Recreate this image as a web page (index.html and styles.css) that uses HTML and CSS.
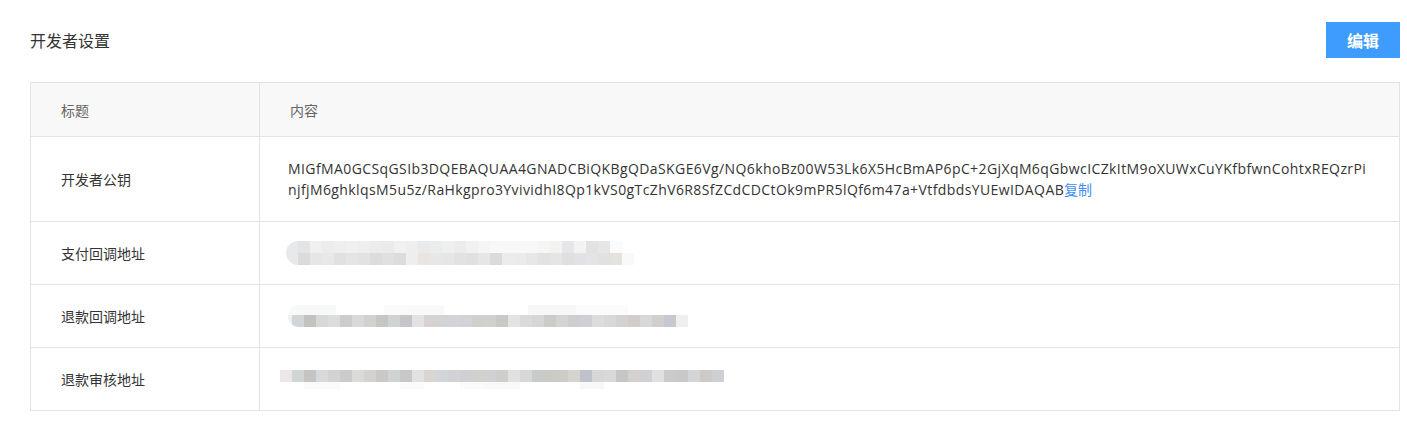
FILE: index.html
```html
<!DOCTYPE html>
<html lang="zh-CN">
<head>
<meta charset="utf-8">
<title>开发者设置</title>
<link rel="stylesheet" href="styles.css">
</head>
<body>
<div class="page">
  <div class="topbar">
    <h1 class="title">开发者设置</h1>
    <button class="btn-edit" type="button">编辑</button>
  </div>
  <table class="info-table">
    <thead>
      <tr class="head-row">
        <th class="col-label">标题</th>
        <th class="col-value">内容</th>
      </tr>
    </thead>
    <tbody>
      <tr class="row-key">
        <td class="col-label">开发者公钥</td>
        <td class="col-value key-text"><span class="key-line">MIGfMA0GCSqGSIb3DQEBAQUAA4GNADCBiQKBgQDaSKGE6Vg/NQ6khoBz00W53Lk6X5HcBmAP6pC+2GjXqM6qGbwcICZkItM9oXUWxCuYKfbfwnCohtxREQzrPi</span><span class="key-line">njfjM6ghklqsM5u5z/RaHkgpro3YvividhI8Qp1kVS0gTcZhV6R8SfZCdCDCtOk9mPR5lQf6m47a+VtfdbdsYUEwIDAQAB<a class="copy-link" href="#">复制</a></span></td>
      </tr>
      <tr class="row">
        <td class="col-label">支付回调地址</td>
        <td class="col-value"><div class="mosaic mosaic-1"></div></td>
      </tr>
      <tr class="row">
        <td class="col-label">退款回调地址</td>
        <td class="col-value"><div class="mosaic mosaic-2"></div></td>
      </tr>
      <tr class="row">
        <td class="col-label">退款审核地址</td>
        <td class="col-value"><div class="mosaic mosaic-3"></div></td>
      </tr>
    </tbody>
  </table>
</div>
</body>
</html>
```

FILE: styles.css
```css
html, body {
  margin: 0;
  padding: 0;
  background: #ffffff;
}

body {
  font-family: "Noto Sans CJK SC", "Open Sans", sans-serif;
  color: #333333;
}

.page {
  padding: 22px 7px 0 30px;
}

.topbar {
  display: flex;
  align-items: center;
  justify-content: space-between;
  height: 36px;
  margin-bottom: 24px;
}

.title {
  margin: 0;
  font-size: 16px;
  font-weight: normal;
  color: #333333;
  line-height: 20px;
}

.btn-edit {
  width: 74px;
  height: 36px;
  border: none;
  background: #3d9cfe;
  color: #ffffff;
  font-family: "Noto Sans CJK SC", sans-serif;
  font-size: 16px;
  font-weight: bold;
  padding: 0;
  cursor: pointer;
}

.info-table {
  width: 1370px;
  border-collapse: collapse;
  table-layout: fixed;
  font-size: 14px;
}

.info-table th,
.info-table td {
  border: 1px solid #e3e3e3;
  padding: 0 30px;
  text-align: left;
  vertical-align: middle;
}

.info-table .col-label {
  width: 168px;
}

.head-row th {
  height: 53px;
  background: #f8f8f8;
  font-weight: normal;
  color: #666666;
}

.row-key td {
  height: 84px;
}

.row td {
  height: 62px;
}

.col-label {
  color: #333333;
}

.key-text {
  font-family: "Open Sans", "Noto Sans CJK SC", sans-serif;
  color: #333333;
  line-height: 21px;
  font-size: 14px;
  letter-spacing: 0.4px;
}

.key-line {
  display: block;
  white-space: nowrap;
  margin-left: -2px;
}

.copy-link {
  color: #3f8cf2;
  text-decoration: none;
  font-family: "Noto Sans CJK SC", sans-serif;
  letter-spacing: 0;
}

.mosaic {
  background-repeat: no-repeat;
}

.mosaic-1 {
  width: 354px;
  height: 24px;
  margin-left: -4px;
  border-radius: 12px 0 0 12px;
  background-image:
    linear-gradient(to right, #e8e9ea 0 12px, #e3e4e5 12px 24px, #eff0ef 24px 36px, #ebeceb 36px 48px, #eeeeee 48px 60px, #f0f0f0 60px 72px, #eeeeee 72px 84px, #ececec 84px 96px, #ebebeb 96px 108px, #f1f1f1 108px 120px, #f0eeec 120px 132px, #e9eaeb 132px 144px, #ebecec 144px 156px, #efefef 156px 168px, #ececeb 168px 180px, #f1f1f1 180px 192px, #f5f5f5 192px 204px, #f8f8f8 204px 216px, #f8f8f8 216px 228px, #f8f8f8 228px 240px, #f8f8f8 240px 252px, #f6f6f6 252px 264px, #f3f3f2 264px 276px, #e6e6ea 276px 288px, #f2f3f2 288px 300px, #e1e3e2 300px 312px, #e5e6e5 312px 324px, #fafbfc 324px 336px, #ffffff 336px 354px),
    linear-gradient(to right, #e9e9ea 0 12px, #dcdbda 12px 24px, #e6e6e6 24px 36px, #e8e8e9 36px 48px, #e1e1e1 48px 60px, #e5e5e5 60px 72px, #e3e2e0 72px 84px, #dddcda 84px 96px, #dfe0df 96px 108px, #dcdbdd 108px 120px, #eeeeee 120px 132px, #e9e5e2 132px 144px, #e6e7e9 144px 156px, #e5e6e7 156px 168px, #e1e2e4 168px 180px, #e1e0de 180px 192px, #e6e6e6 192px 204px, #dbdbd9 204px 216px, #ebecee 216px 228px, #eaebeb 228px 240px, #e6e7e7 240px 252px, #e3e2e0 252px 264px, #e5e5e5 264px 276px, #e0dfde 276px 288px, #e2e2e6 288px 300px, #e3e4e3 300px 312px, #e0e1e0 312px 324px, #e4e2df 324px 336px, #f8f9fa 336px 348px, #ffffff 348px 354px);
  background-size: 100% 12px, 100% 12px;
  background-position: 0 0, 0 12px;
}

.mosaic-2 {
  width: 400px;
  height: 22px;
  margin-left: -2px;
  border-radius: 11px 0 0 11px;
  background-image:
    linear-gradient(to right, #f7f8f8 0 48px, #ffffff 48px 96px, #fafafa 96px 120px, #f9f9f9 120px 156px, #ffffff 156px 240px, #f7f7f7 240px 288px, #fbfbfb 288px 340px, #ffffff 340px 400px),
    linear-gradient(to right, #eef0f0 0 4px, #d2d5d8 4px 16px, #c4c2bf 16px 28px, #d7d8da 28px 40px, #dcdcdc 40px 52px, #ccccca 52px 64px, #d8dad9 64px 76px, #d2d1cf 76px 88px, #c7c6c3 88px 100px, #d0d3d3 100px 112px, #c7c5c9 112px 124px, #e2e2e2 124px 136px, #d7d2cf 136px 148px, #d2d3d7 148px 160px, #d3d4d7 160px 172px, #d2d3d6 172px 184px, #d1cfcc 184px 196px, #d1d0ce 196px 208px, #c9c8c5 208px 220px, #e3e3e3 220px 232px, #d9dbdb 232px 244px, #d4d6d7 244px 256px, #cccbc8 256px 268px, #d5d3d3 268px 280px, #cfcdcd 280px 292px, #cfd0d6 292px 304px, #dcdcdc 304px 316px, #d9d8d6 316px 328px, #d2d2d4 328px 340px, #d2ccca 340px 352px, #d7d8da 352px 364px, #d0cfcd 364px 376px, #c6c9d0 376px 388px, #eeefee 388px 400px);
  background-size: 100% 10px, 100% 12px;
  background-position: 0 0, 0 10px;
}

.mosaic-3 {
  width: 444px;
  height: 19px;
  margin-left: -10px;
  background-image:
    linear-gradient(to right, #ede8e8 0 12px, #d2d5d6 12px 24px, #c6c4c2 24px 36px, #d8d9da 36px 48px, #d3d3d3 48px 60px, #cbcbcb 60px 72px, #dadcda 72px 84px, #d4d3d1 84px 96px, #cac9c6 96px 108px, #d0d4d4 108px 120px, #c8c7ca 120px 132px, #e2e2e2 132px 144px, #d9d5d2 144px 156px, #d4d5d9 156px 168px, #d2d3d6 168px 180px, #d0d0d2 180px 192px, #d2d1ce 192px 204px, #d1d1d1 204px 216px, #cfcecb 216px 228px, #e1e1e1 228px 240px, #d7d9d8 240px 252px, #c9cbcb 252px 264px, #cacac6 264px 276px, #cdccc9 276px 288px, #d5d4d1 288px 300px, #c0c2cb 300px 312px, #d7d7d7 312px 324px, #d9d9d7 324px 336px, #c6c6c6 336px 348px, #d5d1cf 348px 360px, #d0d1d4 360px 372px, #e0e1e0 372px 384px, #cbcbcb 384px 396px, #c9c9c9 396px 408px, #d4d5d7 408px 420px, #cdcbc8 420px 432px, #cfd0d4 432px 444px),
    linear-gradient(to right, #ffffff 0 24px, #fafafa 24px 60px, #ffffff 60px 120px, #fbfbfa 120px 144px, #ffffff 144px 180px, #fbfbfb 180px 204px, #f9f9f9 204px 240px, #ffffff 240px 300px, #f8f8f8 300px 324px, #ffffff 324px 444px);
  background-size: 100% 12px, 100% 7px;
  background-position: 0 0, 0 12px;
}
```
